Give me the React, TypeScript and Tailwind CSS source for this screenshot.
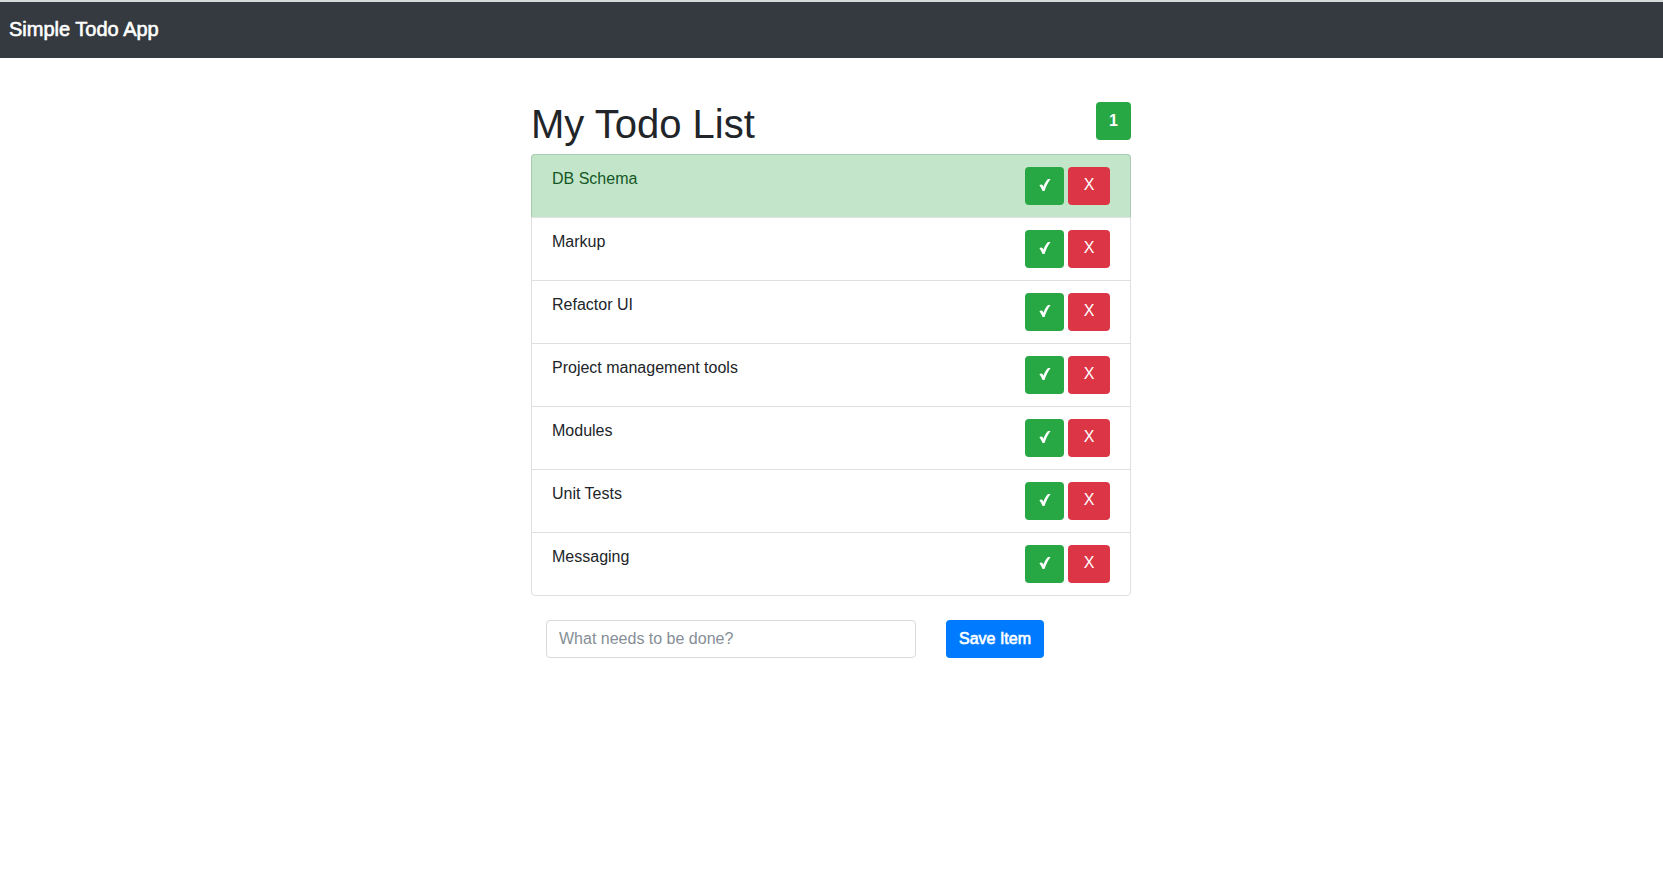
import { useState } from "react";

type Todo = { id: number; title: string; done: boolean };

const initialTodos: Todo[] = [
  { id: 1, title: "DB Schema", done: true },
  { id: 2, title: "Markup", done: false },
  { id: 3, title: "Refactor UI", done: false },
  { id: 4, title: "Project management tools", done: false },
  { id: 5, title: "Modules", done: false },
  { id: 6, title: "Unit Tests", done: false },
  { id: 7, title: "Messaging", done: false },
];

function CheckMark() {
  return (
    <svg width="12" height="14" viewBox="0 0 12 14" fill="currentColor" aria-hidden="true">
      <path d="M0.4 7.4 C1.2 6.2 3 6 3.7 7.2 L4.4 8.8 C5.6 5.4 7.2 2.6 9 1 L11.6 1 C9.2 4.2 6.9 8.4 5.5 13 L3.5 13 C2.8 11 1.9 9 0.4 7.4 Z" />
    </svg>
  );
}

function TodoRow({ todo, onToggle, onRemove }: { todo: Todo; onToggle: () => void; onRemove: () => void }) {
  const tone = todo.done
    ? "border-[#a8cbb0] border-b-[#d5dfd7] bg-[#c3e6cb] text-[#155724]"
    : "border-[#dfdfdf] bg-white text-[#212529]";
  return (
    <li className={`-mb-px flex items-start justify-between border px-5 py-3 first:rounded-t last:mb-0 last:rounded-b ${tone}`}>
      <span>{todo.title}</span>
      <div className="flex gap-1">
        <button
          type="button"
          aria-label={`Complete ${todo.title}`}
          onClick={onToggle}
          className="flex h-[38px] w-[39px] items-center justify-center rounded bg-[#28a745] pb-0.5 text-white"
        >
          <CheckMark />
        </button>
        <button
          type="button"
          aria-label={`Remove ${todo.title}`}
          onClick={onRemove}
          className="h-[38px] w-[42px] rounded bg-[#dc3545] pb-0.5 text-white"
        >
          X
        </button>
      </div>
    </li>
  );
}

export default function App() {
  const [todos, setTodos] = useState(initialTodos);
  const [draft, setDraft] = useState("");

  const save = () => {
    const title = draft.trim();
    if (!title) return;
    setTodos([...todos, { id: Date.now(), title, done: false }]);
    setDraft("");
  };

  return (
    <div className="min-h-screen bg-white font-['Liberation_Sans',Arial,sans-serif] text-base text-[#212529]">
      <nav className="flex h-[58px] items-center border-t-2 border-[#d5dadb] bg-[#343a40] px-[9px] pb-0.5">
        <a href="#" className="text-xl text-white [-webkit-text-stroke:0.6px_white]">
          Simple Todo App
        </a>
      </nav>
      <main className="mx-auto max-w-[601px] pt-[42px] pr-px">
        <header className="mb-1.5 flex items-start justify-between">
          <h1 className="text-[40px] leading-[48px]">My Todo List</h1>
          <span className="mt-0.5 flex h-[38px] w-[35px] items-center justify-center rounded bg-[#28a745] font-bold text-white">
            {todos.filter((todo) => todo.done).length}
          </span>
        </header>
        <ul>
          {todos.map((todo) => (
            <TodoRow
              key={todo.id}
              todo={todo}
              onToggle={() =>
                setTodos(todos.map((item) => (item.id === todo.id ? { ...item, done: !item.done } : item)))
              }
              onRemove={() => setTodos(todos.filter((item) => item.id !== todo.id))}
            />
          ))}
        </ul>
        <form
          className="mt-6 flex gap-[30px] pl-[15px]"
          onSubmit={(event) => {
            event.preventDefault();
            save();
          }}
        >
          <input
            type="text"
            aria-label="New item"
            placeholder="What needs to be done?"
            value={draft}
            onChange={(event) => setDraft(event.target.value)}
            className="h-[38px] w-[370px] rounded border border-[#d9d9d9] bg-white px-3 placeholder:text-[#868e96]"
          />
          <button
            type="submit"
            className="h-[38px] rounded bg-[#007bff] px-[13px] text-white [-webkit-text-stroke:0.6px_white]"
          >
            Save Item
          </button>
        </form>
      </main>
    </div>
  );
}
